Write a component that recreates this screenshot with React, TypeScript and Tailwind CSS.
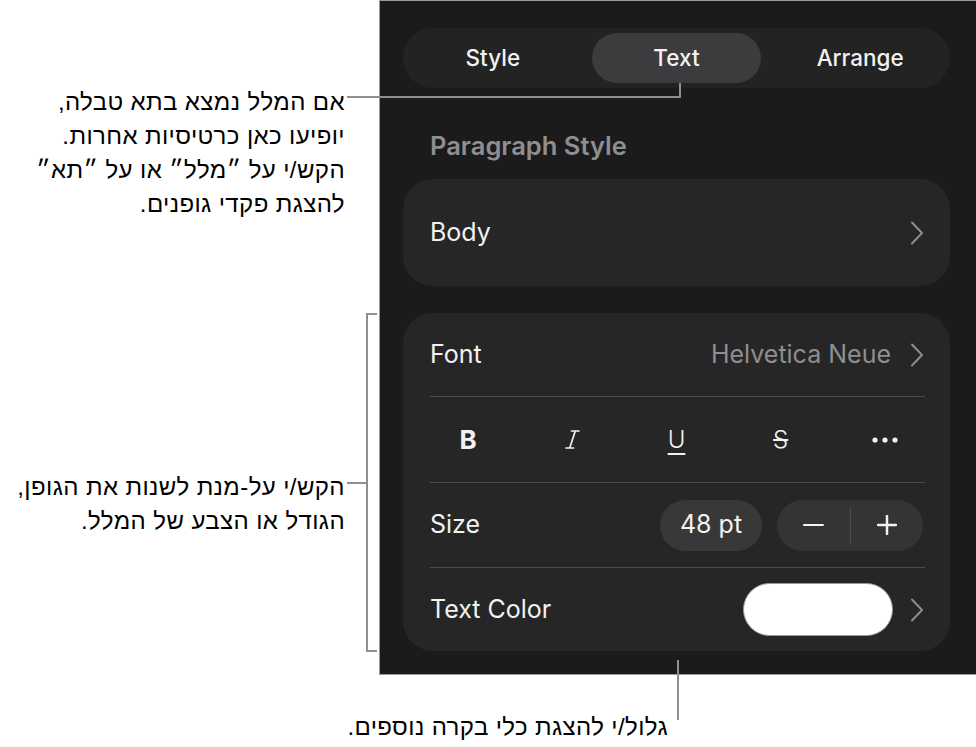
import React from 'react'

function Chevron() {
  return (
    <svg width="14" height="24" viewBox="0 0 14 24" fill="none">
      <path d="M2 1.5 L12 12 L2 22.5" stroke="#8e8e93" strokeWidth="1.9" strokeLinecap="round" strokeLinejoin="round" />
    </svg>
  )
}

function ItalicIcon() {
  return (
    <svg width="15" height="19" viewBox="0 0 15 19" fill="none">
      <path d="M6.5 1 H14 M1 18 H8.5 M10.3 1 L4.7 18" stroke="#f2f2f2" strokeWidth="1.7" strokeLinecap="round" />
    </svg>
  )
}

function Dots() {
  return (
    <svg width="26" height="6" viewBox="0 0 26 6">
      <circle cx="3" cy="3" r="2.6" fill="#f2f2f2" />
      <circle cx="13" cy="3" r="2.6" fill="#f2f2f2" />
      <circle cx="23" cy="3" r="2.6" fill="#f2f2f2" />
    </svg>
  )
}

function Divider() {
  return <div className="ml-[27px] mr-[25px] h-px bg-[#4c4c4e]" />
}

export default function App() {
  return (
    <div className="relative w-[976px] h-[747px] overflow-hidden bg-white font-['Liberation_Sans','DejaVu_Sans',sans-serif] text-black">
      <div className="flex">
        {/* callouts */}
        <div className="w-[379px] shrink-0">
          <p dir="rtl" className="pt-[85px] pr-[34px] text-right text-[24px] leading-[34px] tracking-[0.4px]">
            אם המלל נמצא בתא טבלה,
            <br />
            יופיעו כאן כרטיסיות אחרות.
            <br />
            הקש/י על ״מלל״ או על ״תא״
            <br />
            להצגת פקדי גופנים.
          </p>
          <p dir="rtl" className="mt-[249px] pr-[34px] text-right text-[24px] leading-[34px] tracking-[0.4px]">
            הקש/י על-מנת לשנות את הגופן,
            <br />
            הגודל או הצבע של המלל.
          </p>
        </div>

        {/* inspector panel */}
        <div className="w-[597px] h-[675px] shrink-0 border-l border-t border-b border-[#9a9a9a] bg-[#1b1b1b] pt-[27px] pl-[23px] font-['Inter',sans-serif] text-[#f2f2f2]">
          <div className="grid h-[60px] w-[547px] grid-cols-3 gap-[14px] rounded-full bg-[#232323] p-[5px] text-[22.5px] font-medium">
            <div className="flex items-center justify-center rounded-full">Style</div>
            <div className="flex items-center justify-center rounded-full bg-[#3c3c3e]">Text</div>
            <div className="flex items-center justify-center rounded-full">Arrange</div>
          </div>

          <div className="mt-[44px] px-[27px] text-[25.5px] font-semibold leading-[28px] text-[#8e8e93]">Paragraph Style</div>

          <div className="mt-[19px] flex h-[107px] w-[547px] items-center justify-between rounded-[30px] bg-[#262626] pl-[27px] pr-[26px] text-[25px]">
            <span>Body</span>
            <Chevron />
          </div>

          <div className="mt-[27px] w-[547px] rounded-[30px] bg-[#262626] text-[25px]">
            <div className="flex h-[83px] items-center justify-between pl-[27px] pr-[26px]">
              <span>Font</span>
              <div className="flex items-center gap-[19px]">
                <span className="text-[#8e8e93]">Helvetica Neue</span>
                <Chevron />
              </div>
            </div>
            <Divider />
            <div className="grid h-[85px] grid-cols-5 items-center px-[13px]">
              <div className="flex justify-center text-[26px] font-bold">B</div>
              <div className="flex justify-center"><ItalicIcon /></div>
              <div className="flex justify-center text-[24px] font-light underline decoration-[1.5px] underline-offset-[5px]">U</div>
              <div className="flex justify-center text-[24px] font-light line-through decoration-[1.5px]">S</div>
              <div className="flex justify-center"><Dots /></div>
            </div>
            <Divider />
            <div className="flex h-[84px] items-center justify-between pl-[27px] pr-[27px]">
              <span>Size</span>
              <div className="flex items-center gap-[15px]">
                <div className="flex h-[51px] w-[102px] items-center justify-center rounded-full bg-[#383838]">48 pt</div>
                <div className="flex h-[51px] w-[146px] items-center rounded-full bg-[#343434]">
                  <div className="flex flex-1 items-center justify-center">
                    <div className="h-[2.5px] w-[21px] rounded-full bg-[#f2f2f2]" />
                  </div>
                  <div className="h-[37px] w-px bg-[#4e4e50]" />
                  <div className="flex flex-1 items-center justify-center">
                    <svg width="20" height="20" viewBox="0 0 20 20">
                      <path d="M10 1 V19 M1 10 H19" stroke="#f2f2f2" strokeWidth="2.5" strokeLinecap="round" />
                    </svg>
                  </div>
                </div>
              </div>
            </div>
            <Divider />
            <div className="flex h-[83px] items-center justify-between pl-[27px] pr-[26px]">
              <span>Text Color</span>
              <div className="flex items-center gap-[17px]">
                <div className="h-[53px] w-[150px] rounded-full border border-[#9a9a9a] bg-white" />
                <Chevron />
              </div>
            </div>
          </div>
        </div>
      </div>

      <p dir="rtl" className="mt-[35px] pr-[308px] text-right text-[24px] leading-[34px] tracking-[0.4px]">
        גלול/י להצגת כלי בקרה נוספים.
      </p>

      {/* leader lines */}
      <div className="absolute left-[347px] top-[96px] h-[2px] w-[334px] bg-[#8f8f8f]" />
      <div className="absolute left-[679px] top-[83px] h-[15px] w-[2px] bg-[#8f8f8f]" />
      <div className="absolute left-[347px] top-[482px] h-[2px] w-[21px] bg-[#8f8f8f]" />
      <div className="absolute left-[366px] top-[313px] h-[339px] w-[11px] border-y-2 border-l-2 border-[#8f8f8f]" />
      <div className="absolute left-[677px] top-[660px] h-[60px] w-[2px] bg-[#8f8f8f]" />
    </div>
  )
}
